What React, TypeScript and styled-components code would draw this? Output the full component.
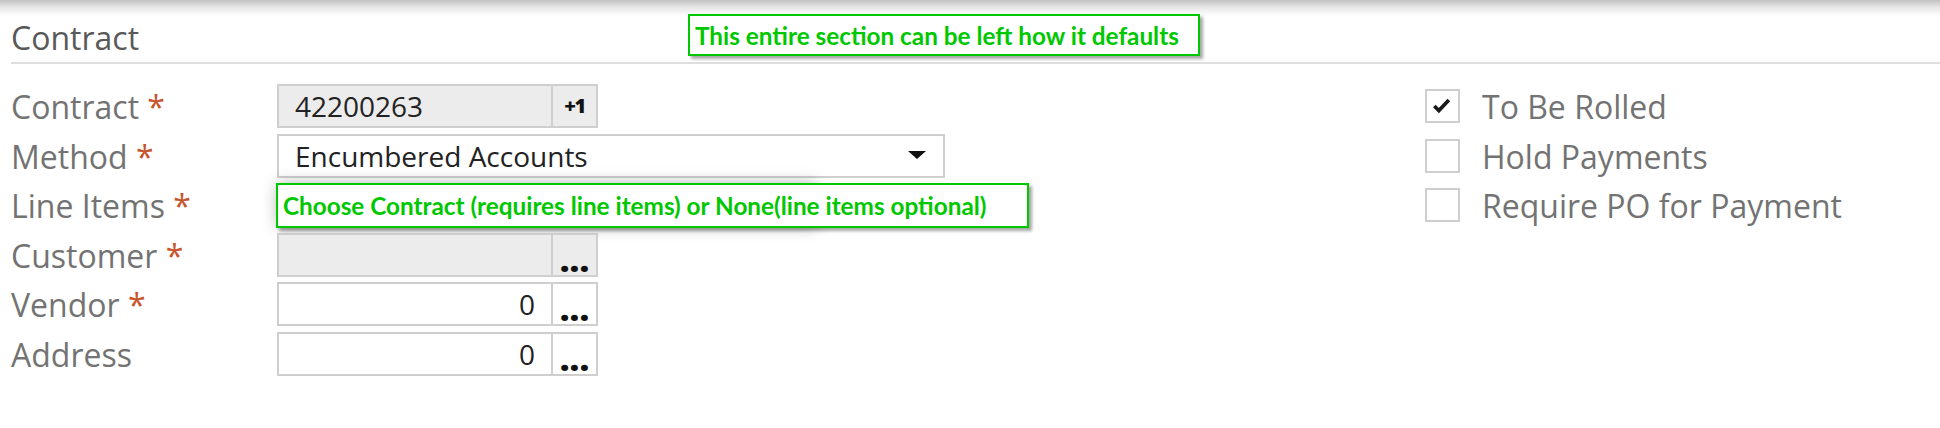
import React from "react";
import styled, { createGlobalStyle } from "styled-components";

const GlobalStyle = createGlobalStyle`
  body {
    margin: 0;
    background: #fff;
    font-family: "Open Sans", "Noto Sans", sans-serif;
  }
`;

interface FieldRow {
  label: string;
  required?: boolean;
}

const checks = [
  { label: "To Be Rolled", checked: true },
  { label: "Hold Payments", checked: false },
  { label: "Require PO for Payment", checked: false },
];

function Label({ label, required }: FieldRow) {
  return (
    <FieldLabel>
      {label}
      {required && <Required> *</Required>}
    </FieldLabel>
  );
}

function Lookup({
  value,
  readOnly,
  button,
}: {
  value?: string;
  readOnly?: boolean;
  button: "count" | "more";
}) {
  return (
    <LookupBox $readOnly={readOnly}>
      <LookupValue $right={!readOnly}>{value}</LookupValue>
      <LookupButton $kind={button}>{button === "count" ? "+1" : "..."}</LookupButton>
    </LookupBox>
  );
}

function Caret() {
  return (
    <CaretIcon width="18" height="9" viewBox="0 0 18 9">
      <polygon points="0,0 18,0 9,8" fill="#111" />
    </CaretIcon>
  );
}

function App() {
  return (
    <Page>
      <GlobalStyle />
      <TopShade />
      <Section>
        <SectionTitle>Contract</SectionTitle>
        <Body>
          <FormGrid>
            <Label label="Contract" required />
            <Lookup value="42200263" readOnly button="count" />

            <Label label="Method" required />
            <Select>
              <SelectText>Encumbered Accounts</SelectText>
              <Caret />
            </Select>

            <Label label="Line Items" required />
            <LineItems />

            <Label label="Customer" required />
            <Lookup readOnly button="more" />

            <Label label="Vendor" required />
            <Lookup value="0" button="more" />

            <Label label="Address" />
            <Lookup value="0" button="more" />
          </FormGrid>

          <CheckList>
            {checks.map((c) => (
              <CheckRow key={c.label}>
                <CheckBox>
                  {c.checked && (
                    <svg width="34" height="34" viewBox="0 0 34 34">
                      <polyline
                        points="8,17 13,22 24,10.5"
                        fill="none"
                        stroke="#1a1a1a"
                        strokeWidth="4"
                      />
                    </svg>
                  )}
                </CheckBox>
                <CheckLabel>{c.label}</CheckLabel>
              </CheckRow>
            ))}
          </CheckList>
        </Body>
      </Section>

      <Note $x={688} $y={14} $w={512} $h={42}>
        This entire section can be left how it defaults
      </Note>
      <Note $x={276} $y={183} $w={753} $h={45}>
        Choose Contract (requires line items) or None(line items optional)
      </Note>
    </Page>
  );
}

const Page = styled.div`
  position: relative;
  width: 1940px;
  height: 428px;
  overflow: hidden;
  background: #fff;
`;

const TopShade = styled.div`
  height: 16px;
  background: linear-gradient(to bottom, #c2c2c2, #e6e6e6 45%, #fff);
`;

const Section = styled.section`
  padding-left: 11px;
`;

const SectionTitle = styled.h2`
  margin: 0;
  font-weight: 400;
  font-size: 32px;
  line-height: 44px;
  color: #595959;
  padding-bottom: 2px;
  border-bottom: 2px solid #dedede;
`;

const Body = styled.div`
  display: grid;
  grid-template-columns: 1414px 1fr;
  margin-top: 20px;
`;

const FormGrid = styled.div`
  display: grid;
  grid-template-columns: 266px auto;
  row-gap: 5.5px;
  align-items: center;
  justify-items: start;
`;

const FieldLabel = styled.div`
  box-sizing: border-box;
  height: 44px;
  padding-top: 2px;
  font-size: 32px;
  line-height: 42px;
  color: #737373;
  white-space: nowrap;
`;

const Required = styled.span`
  color: #c8542c;
`;

const LookupBox = styled.div<{ $readOnly?: boolean }>`
  display: flex;
  box-sizing: border-box;
  width: 321px;
  height: 44px;
  border: 2px solid #cfcfcf;
  background: ${(p) => (p.$readOnly ? "#ececec" : "#fff")};
`;

const LookupValue = styled.div<{ $right?: boolean }>`
  flex: 1;
  padding: 0 16px;
  font-size: 28px;
  line-height: 40px;
  color: #222;
  text-align: ${(p) => (p.$right ? "right" : "left")};
`;

const LookupButton = styled.div<{ $kind: "count" | "more" }>`
  box-sizing: border-box;
  width: 45px;
  border-left: 2px solid #cfcfcf;
  text-align: center;
  font-weight: 800;
  color: #111;
  font-size: ${(p) => (p.$kind === "count" ? "20px" : "34px")};
  line-height: 40px;
  padding-top: ${(p) => (p.$kind === "count" ? "0" : "4px")};
  letter-spacing: ${(p) => (p.$kind === "count" ? "-1.5px" : "0")};
`;

const Select = styled.div`
  display: flex;
  align-items: center;
  box-sizing: border-box;
  width: 668px;
  height: 44px;
  padding: 0 17px 0 16px;
  border: 2px solid #cfcfcf;
  background: #fff;
`;

const SelectText = styled.span`
  flex: 1;
  font-size: 28px;
  line-height: 40px;
  color: #222;
`;

const CaretIcon = styled.svg`
  display: block;
`;

const LineItems = styled.div`
  box-sizing: border-box;
  width: 540px;
  height: 44px;
  border: 2px solid #cfcfcf;
  background: #fff;
  box-shadow: 0 0 16px rgba(0, 0, 0, 0.28);
`;

const CheckList = styled.div`
  display: flex;
  flex-direction: column;
  gap: 5.5px;
`;

const CheckRow = styled.div`
  display: flex;
  align-items: center;
  gap: 22px;
  height: 44px;
`;

const CheckBox = styled.div`
  box-sizing: border-box;
  width: 35px;
  height: 34px;
  border: 2px solid #cfcfcf;
  background: #fff;
  display: flex;
  align-items: center;
  justify-content: center;
`;

const CheckLabel = styled.span`
  font-size: 32px;
  line-height: 42px;
  padding-top: 2px;
  color: #737373;
`;

const Note = styled.div<{ $x: number; $y: number; $w: number; $h: number }>`
  position: absolute;
  left: ${(p) => p.$x}px;
  top: ${(p) => p.$y}px;
  width: ${(p) => p.$w}px;
  height: ${(p) => p.$h}px;
  box-sizing: border-box;
  display: flex;
  align-items: center;
  padding-left: 5px;
  border: 2px solid #00c800;
  background: #fff;
  box-shadow: 3px 3px 3px rgba(0, 0, 0, 0.35);
  color: #00c800;
  font-family: Lato, "Liberation Sans", sans-serif;
  font-weight: 700;
  font-size: 24.3px;
  white-space: nowrap;
`;

export default App;
